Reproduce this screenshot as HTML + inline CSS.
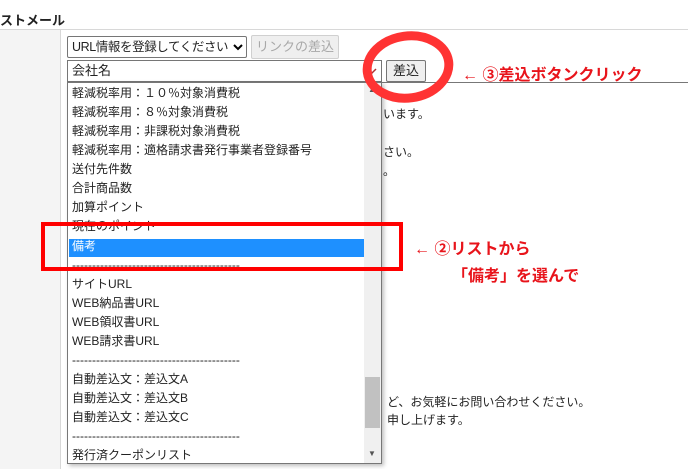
<!DOCTYPE html>
<html><head><meta charset="utf-8"><style>
*{margin:0;padding:0;box-sizing:border-box}
body{width:688px;height:469px;overflow:hidden;background:#fff;position:relative;font-family:"Liberation Sans","Noto Sans CJK JP",sans-serif;font-size:12px;color:#222}
.a{position:absolute;white-space:nowrap}
.item{position:absolute;left:72px;height:19px;line-height:19px;font-size:12px;color:#222;white-space:nowrap}
.red{color:#e8141b;font-weight:bold;font-size:16px}
</style></head><body>
<div class="a" style="left:0;top:10px;font-size:13px;font-weight:bold">ストメール</div>
<div class="a" style="left:0;top:29px;width:688px;height:1px;background:#d8d8d8"></div>
<div class="a" style="left:0;top:30px;width:61px;height:439px;background:#f4f4f4;border-right:1px solid #d8d8d8"></div>
<div class="a" style="left:67px;top:36px;width:180px;height:22px;border:1px solid #767676;border-radius:2px;background:#fff;font-size:12.5px;letter-spacing:-0.4px;line-height:20px;padding-left:4px;overflow:hidden">URL情報を登録してください</div>
<svg class="a" style="left:233px;top:43px" width="10" height="8"><path d="M1 2 L5 6 L9 2" fill="none" stroke="#000" stroke-width="2"/></svg>
<div class="a" style="left:251px;top:35px;width:88px;height:24px;border:1px solid #d0d0d0;border-radius:2px;background:#efefef;color:#a8a8a8;font-size:13px;line-height:22px;text-align:center">リンクの差込</div>
<div class="a" style="left:67px;top:60px;width:315px;height:22px;border:1px solid #767676;background:#fff;font-size:13px;line-height:20px;padding-left:4px">会社名</div>
<svg class="a" style="left:367px;top:67px" width="10" height="8"><path d="M1 2 L5 6 L9 2" fill="none" stroke="#b03030" stroke-width="1.5"/></svg>
<div class="a" style="left:386px;top:60px;width:40px;height:22px;border:1px solid #767676;border-radius:2px;background:#efefef;font-size:13px;line-height:20px;text-align:center">差込</div>
<div class="a" style="left:381px;top:82px;width:307px;height:1px;background:#777"></div>
<div class="a" style="left:383px;top:105px;font-size:12px">います。</div>
<div class="a" style="left:383px;top:143px;font-size:12px">さい。</div>
<div class="a" style="left:383px;top:162px;font-size:12px">。</div>
<div class="a" style="left:387px;top:393px;font-size:12px">ど、お気軽にお問い合わせください。</div>
<div class="a" style="left:387px;top:411px;font-size:12px">申し上げます。</div>
<div class="a" style="left:67px;top:82px;width:315px;height:382px;border:1px solid #777;background:#fff;box-shadow:2px 2px 4px rgba(0,0,0,.25);overflow:hidden">
<div class="a" style="left:296px;top:0;width:17px;height:380px;background:#f0f0f0"></div>
<div class="a" style="left:297px;top:294px;width:15px;height:51px;background:#c1c1c1"></div>
<div class="a" style="left:300px;top:2px;font-size:8px;color:#555">&#9650;</div>
<div class="a" style="left:300px;top:366px;font-size:8px;color:#555">&#9660;</div>
<div class="a" style="left:1px;top:156px;width:295px;height:18px;background:#1e90ff"></div>
</div>
<div class="item" style="top:84px">軽減税率用：１０％対象消費税</div>
<div class="item" style="top:103px">軽減税率用：８％対象消費税</div>
<div class="item" style="top:122px">軽減税率用：非課税対象消費税</div>
<div class="item" style="top:141px">軽減税率用：適格請求書発行事業者登録番号</div>
<div class="item" style="top:160px">送付先件数</div>
<div class="item" style="top:179px">合計商品数</div>
<div class="item" style="top:198px">加算ポイント</div>
<div class="item" style="top:217px">現在のポイント</div>
<div class="item" style="top:237px;color:#fff">備考</div>
<div class="item" style="top:256px">------------------------------------------</div>
<div class="item" style="top:275px">サイトURL</div>
<div class="item" style="top:294px">WEB納品書URL</div>
<div class="item" style="top:313px">WEB領収書URL</div>
<div class="item" style="top:332px">WEB請求書URL</div>
<div class="item" style="top:351px">------------------------------------------</div>
<div class="item" style="top:370px">自動差込文：差込文A</div>
<div class="item" style="top:389px">自動差込文：差込文B</div>
<div class="item" style="top:408px">自動差込文：差込文C</div>
<div class="item" style="top:427px">------------------------------------------</div>
<div class="item" style="top:446px">発行済クーポンリスト</div>
<div class="a" style="left:41px;top:222px;width:362px;height:49px;border:4px solid #f00"></div>
<svg class="a" style="left:0;top:0" width="688" height="469"><ellipse cx="408" cy="67" rx="41" ry="31" fill="none" stroke="#ff3333" stroke-width="9" transform="rotate(-8 408 67)"/></svg>
<div class="a red" style="left:462px;top:61px">← ③差込ボタンクリック</div>
<div class="a red" style="left:414px;top:235px">← ②リストから</div>
<div class="a red" style="left:452px;top:262px">「備考」を選んで</div>
</body></html>
